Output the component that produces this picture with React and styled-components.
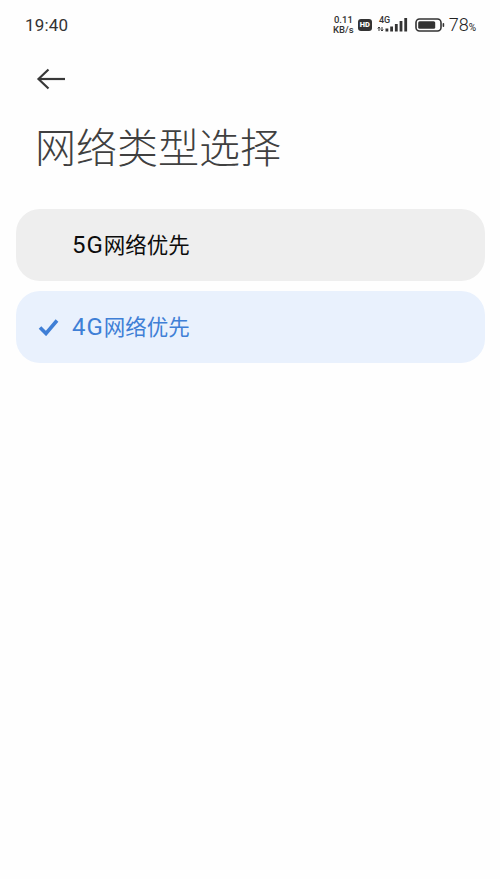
import styled, { createGlobalStyle } from 'styled-components';

const GlobalStyle = createGlobalStyle`
  html, body {
    margin: 0;
    padding: 0;
    background: #fefefe;
  }
  body {
    font-family: Roboto, "Noto Sans CJK SC", sans-serif;
  }
`;

const Page = styled.div`
  width: 500px;
  height: 879px;
  overflow: hidden;
  background: #fefefe;
  display: flex;
  flex-direction: column;
`;

const StatusBar = styled.div`
  height: 49px;
  box-sizing: border-box;
  padding: 0 24px 0 25px;
  display: flex;
  align-items: center;
  justify-content: space-between;
  color: #333;
`;

const Clock = styled.span`
  font-size: 17px;
  letter-spacing: 0.2px;
`;

const StatusRight = styled.div`
  display: flex;
  align-items: center;
`;

const Speed = styled.div`
  font-size: 9.5px;
  font-weight: 500;
  line-height: 9.5px;
  text-align: center;
  margin-right: 4px;
`;

const HdBadge = styled.span`
  width: 14px;
  height: 12px;
  border-radius: 3px;
  background: #333;
  color: #fefefe;
  font-size: 7.5px;
  font-weight: 900;
  display: flex;
  align-items: center;
  justify-content: center;
  margin-right: 5px;
`;

const Signal = styled.svg`
  width: 31px;
  height: 18px;
  margin-right: 7px;
`;

const Battery = styled.svg`
  width: 30px;
  height: 14px;
  margin-right: 4px;
`;

const Percent = styled.span`
  font-size: 18px;
  font-weight: 300;
  color: #222;
  display: flex;
  align-items: baseline;
  small {
    font-size: 10px;
    font-weight: 400;
  }
`;

const BackButton = styled.button`
  align-self: flex-start;
  margin: 14px 0 0 36px;
  padding: 0;
  border: none;
  background: none;
  height: 32px;
  display: flex;
  color: #383838;
`;

const Title = styled.h1`
  margin: 20px 0 0 35px;
  font-size: 41px;
  line-height: 60px;
  font-weight: 300;
  color: #404040;
  font-family: "Noto Sans CJK SC", sans-serif;
`;

const OptionList = styled.div`
  margin: 34px 15px 0 16px;
  display: flex;
  flex-direction: column;
  gap: 10px;
`;

const Option = styled.div`
  height: 72px;
  box-sizing: border-box;
  border-radius: 24px;
  display: flex;
  align-items: center;
  position: relative;
  padding: 0 0 4px 56px;
  font-size: 21.5px;
  background: ${({ $selected }) => ($selected ? '#e9f1fd' : '#eeeeee')};
  color: ${({ $selected }) => ($selected ? '#3f7fd6' : '#0c0c0c')};
`;

const Latin = styled.span`
  font-size: 24px;
  letter-spacing: 1px;
`;

const Check = styled.svg`
  position: absolute;
  left: 22px;
  top: 27px;
  width: 21px;
  height: 18px;
`;

export default function App() {
  return (
    <Page>
      <GlobalStyle />
      <StatusBar>
        <Clock>19:40</Clock>
        <StatusRight>
          <Speed>
            0.11
            <br />
            KB/s
          </Speed>
          <HdBadge>HD</HdBadge>
          <Signal viewBox="0 0 31 18">
            <text x="2" y="7" fontSize="9" fontWeight="500" fontFamily="Roboto" fill="#333">
              4G
            </text>
            <path d="M2 11v4M0.8 12.5 2 11l1.2 1.5M5 15v-4M3.8 13.5 5 15l1.2-1.5" stroke="#333" strokeWidth="1" fill="none" />
            <rect x="8.5" y="12.5" width="2.8" height="3" fill="#333" />
            <rect x="13.2" y="10.5" width="2.8" height="5" fill="#333" />
            <rect x="17.9" y="8" width="2.8" height="7.5" fill="#333" />
            <rect x="22.6" y="5" width="2.8" height="10.5" fill="#333" />
            <rect x="27.3" y="2" width="2.8" height="13.5" fill="#333" />
          </Signal>
          <Battery viewBox="0 0 30 14">
            <rect x="1" y="1" width="25" height="12" rx="3.5" fill="none" stroke="#333" strokeWidth="1.6" />
            <rect x="3.2" y="3.2" width="17" height="7.6" rx="1.5" fill="#333" />
            <rect x="27.6" y="5" width="1.6" height="4" rx="0.8" fill="#333" />
          </Battery>
          <Percent>
            78<small>%</small>
          </Percent>
        </StatusRight>
      </StatusBar>

      <BackButton aria-label="返回">
        <svg width="30" height="32" viewBox="0 0 30 32" fill="none" stroke="currentColor" strokeWidth="2.2">
          <path d="M29 16H3" />
          <path d="M12.5 6.5 2.5 16l10 9.5" />
        </svg>
      </BackButton>

      <Title>网络类型选择</Title>

      <OptionList>
        <Option>
          <span>
            <Latin>5G</Latin>网络优先
          </span>
        </Option>
        <Option $selected>
          <Check viewBox="0 0 21 18" fill="none" stroke="#3f7fd6" strokeWidth="3.6">
            <path d="M2 9.5 8 15.5 19 2.5" />
          </Check>
          <span>
            <Latin>4G</Latin>网络优先
          </span>
        </Option>
      </OptionList>
    </Page>
  );
}
